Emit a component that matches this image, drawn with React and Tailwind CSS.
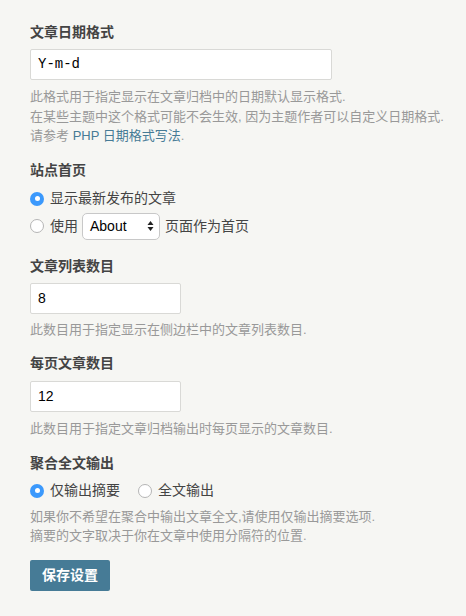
import React from 'react';

const font = { fontFamily: '"Liberation Sans", "Noto Sans CJK SC", sans-serif' };

function Radio({ checked, className = '' }) {
  return checked ? (
    <span className={`flex h-[14px] w-[14px] shrink-0 items-center justify-center rounded-full bg-[#3b99fc] ${className}`}>
      <span className="h-[5px] w-[5px] rounded-full bg-white" />
    </span>
  ) : (
    <span className={`block h-[14px] w-[14px] shrink-0 rounded-full border border-[#b5b5b5] bg-white ${className}`} />
  );
}

function Label({ children, className = '' }) {
  return <div className={`text-[14px] font-bold leading-[20px] text-[#444] ${className}`}>{children}</div>;
}

function Help({ children, className = '' }) {
  return <div className={`text-[13px] leading-[19.5px] text-[#999] ${className}`}>{children}</div>;
}

export default function App() {
  return (
    <div className="min-h-[616px] w-[466px] bg-[#f6f6f3] pl-[30px] pt-[22px] text-[#444]" style={font}>
      {/* 文章日期格式 */}
      <Label>文章日期格式</Label>
      <div className="mt-[7px] flex h-[31px] w-[302px] items-center rounded-[2px] border border-[#d9d9d6] bg-white pl-[7px] text-[14px] text-black" style={{ fontFamily: '"Liberation Mono", monospace' }}>
        Y-m-d
      </div>
      <Help className="mt-[7px]">
        <div>此格式用于指定显示在文章归档中的日期默认显示格式.</div>
        <div>在某些主题中这个格式可能不会生效, 因为主题作者可以自定义日期格式.</div>
        <div>
          请参考 <span className="text-[#467b96]">PHP 日期格式写法</span>.
        </div>
      </Help>

      {/* 站点首页 */}
      <Label className="mt-[14px]">站点首页</Label>
      <div className="mt-[7px] flex h-[24px] items-center text-[14px]">
        <Radio checked />
        <span className="ml-[6px]">显示最新发布的文章</span>
      </div>
      <div className="mt-[2px] flex h-[27px] items-center text-[14px]">
        <Radio />
        <span className="ml-[6px]">使用</span>
        <div className="ml-[4px] flex h-[27px] w-[78px] items-center justify-between rounded-[5px] border border-[#c8c8c8] bg-white pl-[7px] pr-[5px] text-black">
          <span>About</span>
          <svg width="7" height="12" viewBox="0 0 7 12">
            <path d="M3.5 1 L6.5 5 L0.5 5 Z" fill="#222" />
            <path d="M3.5 11 L6.5 7 L0.5 7 Z" fill="#222" />
          </svg>
        </div>
        <span className="ml-[5px]">页面作为首页</span>
      </div>

      {/* 文章列表数目 */}
      <Label className="mt-[16px]">文章列表数目</Label>
      <div className="mt-[7px] flex h-[31px] w-[151px] items-center rounded-[2px] border border-[#d9d9d6] bg-white pl-[7px] text-[14px] text-black">
        8
      </div>
      <Help className="mt-[6px]">此数目用于指定显示在侧边栏中的文章列表数目.</Help>

      {/* 每页文章数目 */}
      <Label className="mt-[14px]">每页文章数目</Label>
      <div className="mt-[8px] flex h-[31px] w-[151px] items-center rounded-[2px] border border-[#d9d9d6] bg-white pl-[7px] text-[14px] text-black">
        12
      </div>
      <Help className="mt-[7px]">此数目用于指定文章归档输出时每页显示的文章数目.</Help>

      {/* 聚合全文输出 */}
      <Label className="mt-[14px]">聚合全文输出</Label>
      <div className="mt-[6px] flex h-[24px] items-center text-[14px]">
        <Radio checked />
        <span className="ml-[6px]">仅输出摘要</span>
        <Radio className="ml-[18px]" />
        <span className="ml-[6px]">全文输出</span>
      </div>
      <Help className="mt-[4px]">
        <div>如果你不希望在聚合中输出文章全文,请使用仅输出摘要选项.</div>
        <div>摘要的文字取决于你在文章中使用分隔符的位置.</div>
      </Help>

      <button className="mt-[14px] h-[31px] w-[80px] rounded-[2px] bg-[#467b96] text-[14px] font-bold text-white">
        保存设置
      </button>
    </div>
  );
}
